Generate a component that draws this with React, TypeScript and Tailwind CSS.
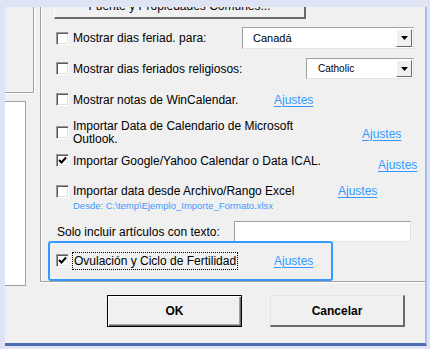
import React from "react";

const font = "font-['Liberation_Sans',Arial,sans-serif]";

const Check = ({ checked = false }: { checked?: boolean }) => (
  <span className="flex h-[13px] w-[13px] shrink-0 items-center justify-center border border-[#9a9a9a] border-b-white border-r-white bg-white shadow-[inset_1px_1px_0_#5a5a5a,inset_-1px_-1px_0_#e3e3e3]">
    {checked && (
      <svg width="9" height="9" viewBox="0 0 9 9">
        <path d="M1 4 L3.5 6.5 L8 1.5" fill="none" stroke="#000" strokeWidth="2" />
      </svg>
    )}
  </span>
);

const Link = ({ className = "" }: { className?: string }) => (
  <span className={`whitespace-nowrap text-[12px] leading-[14px] text-[#3399ff] underline underline-offset-[2px] ${className}`}>
    Ajustes
  </span>
);

const Select = ({ value, className, textClass }: { value: string; className: string; textClass: string }) => (
  <div
    className={`flex items-stretch border border-[#a0a0a0] border-b-[#e3e3e3] border-r-[#e3e3e3] bg-white ${className}`}
  >
    <span className={`flex flex-1 items-center text-black ${textClass}`}>{value}</span>
    <span className="m-[1px] flex w-[16px] items-center justify-center border border-white border-b-[#696969] border-r-[#696969] bg-[#f0f0f0]">
      <svg width="7" height="4" viewBox="0 0 7 4">
        <path d="M0 0 H7 L3.5 4 Z" fill="#000" />
      </svg>
    </span>
  </div>
);

const App = () => {
  return (
    <div className={`h-[349px] w-[430px] bg-[#dfe4f5] pb-[3px] pl-[5px] pr-[3px] pt-[7px] ${font}`}>
      <div className="flex h-full w-full flex-col overflow-hidden border-b-[3px] border-r-2 border-b-[#4a6db4] border-r-[#a8bce6] bg-[#f0f0f0] text-[12px] text-black">
        <div className="flex h-[279px] items-start">
          <div className="flex w-[35px] shrink-0 flex-col">
            <div className="h-[86px] w-[29px] border-b border-r border-[#a0a0a0] shadow-[1px_1px_0_#fff]" />
            <div className="mt-[8px] h-[185px] w-[21px] border-b border-r border-t border-[#a0a0a0] bg-white" />
          </div>

          <div className="flex h-[275px] flex-1 flex-col whitespace-nowrap border-b border-l border-[#a0a0a0] pl-[15px] shadow-[inset_1px_0_0_#fff,0_1px_0_#fff]">
            <div className="-mt-[17px] ml-[-2px] flex h-[29px] w-[252px] shrink-0 items-center justify-center border border-white border-b-2 border-r-2 border-b-[#696969] border-r-[#696969] pt-[4px] text-[12px]">
              Fuente y Propiedades Comunes...
            </div>

            <div className="mt-[8px] flex h-[22px] w-[358px] items-center">
              <Check />
              <span className="ml-[4px]">Mostrar dias feriad. para:</span>
              <Select value="Canadá" className="ml-auto h-[22px] w-[172px]" textClass="pl-[10px] text-[11px]" />
            </div>

            <div className="mt-[9px] flex h-[22px] w-[358px] items-center">
              <Check />
              <span className="ml-[4px]">Mostrar dias feriados religiosos:</span>
              <Select value="Catholic" className="ml-auto h-[21px] w-[108px]" textClass="pl-[11px] text-[10px]" />
            </div>

            <div className="mt-[10px] flex h-[22px] items-center">
              <Check />
              <span className="ml-[4px] w-[201px]">Mostrar notas de WinCalendar.</span>
              <Link />
            </div>

            <div className="mt-[9px] flex h-[26px] items-center">
              <Check />
              <span className="ml-[4px] w-[289px] leading-[13px]">
                Importar Data de Calendario de Microsoft
                <br />
                Outlook.
              </span>
              <Link className="mt-[2px]" />
            </div>

            <div className="mt-[4px] flex h-[22px] items-center">
              <Check checked />
              <span className="ml-[4px] w-[305px]">Importar Google/Yahoo Calendar o Data ICAL.</span>
              <Link className="mt-[9px]" />
            </div>

            <div className="mt-[9px] flex h-[22px] items-center">
              <Check />
              <span className="ml-[4px] w-[265px]">Importar data desde Archivo/Rango Excel</span>
              <Link />
            </div>
            <div className="-mt-[2px] h-[12px] pl-[17px] text-[9.5px] leading-[12px] text-[#3d9bff]">
              Desde: C:\temp\Ejemplo_Importe_Formato.xlsx
            </div>

            <div className="mt-[9px] flex h-[21px] w-[355px] items-center">
              <span className="ml-[1px] mt-[1px]">Solo incluir artículos con texto:</span>
              <div className="ml-auto h-[21px] w-[177px] border border-[#a0a0a0] border-b-[#e3e3e3] border-r-[#e3e3e3] bg-white" />
            </div>

            <div className="-mt-[1px] ml-[-8px] flex h-[40px] w-[285px] shrink-0 items-center rounded-[3px] border-2 border-[#3399ff] pl-[6px]">
              <Check checked />
              <span className="ml-[3px] flex w-[202px]">
                <span className="flex h-[18px] items-center border border-dotted border-black px-[1px]">
                  Ovulación y Ciclo de Fertilidad
                </span>
              </span>
              <Link />
            </div>
          </div>
        </div>

        <div className="mt-[9px] flex gap-[28px] pl-[102px]">
          <div className="flex h-[32px] w-[135px] items-center justify-center border border-black font-bold shadow-[inset_1px_1px_0_#fff,inset_-1px_-1px_0_#696969,inset_-2px_-2px_0_#a0a0a0]">
            OK
          </div>
          <div className="flex h-[32px] w-[135px] items-center justify-center border border-[#e3e3e3] border-b-2 border-r-2 border-b-[#696969] border-r-[#696969] font-bold">
            Cancelar
          </div>
        </div>
      </div>
    </div>
  );
};

export default App;
